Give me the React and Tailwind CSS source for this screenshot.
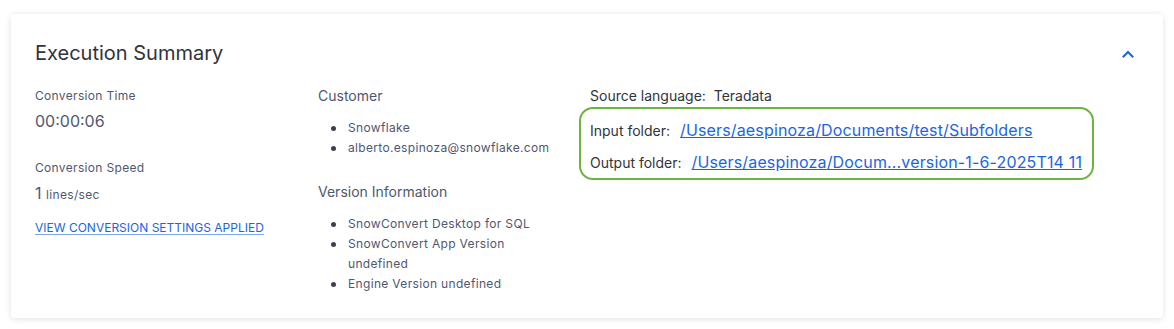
import React from 'react';

function Bullet({ children }) {
	return (
		<li className="flex items-start leading-5">
			<span className="w-[30px] shrink-0 pl-[13px] pt-[8px]">
				<span className="block w-[5px] h-[5px] rounded-full bg-[#3c4253]"></span>
			</span>
			<span>{children}</span>
		</li>
	);
}

function App() {
	return (
		<div className="bg-white w-[1174px] h-[329px] pt-[14px] pl-[11px]" style={{ fontFamily: 'Inter, "Noto Sans", sans-serif' }}>
			<div className="w-[1152px] h-[304px] bg-white rounded-[4px] shadow-[0_1px_6px_rgba(0,0,0,0.12)] px-[24px] pt-[25px]">
				<div className="flex items-center justify-between h-[28px]">
					<h2 className="text-[20px] leading-7 text-[#31343b]">Execution Summary</h2>
					<svg width="12" height="8" viewBox="0 0 12 8" className="mr-[5px] mt-[1px]">
						<polyline points="1.5,6.5 6,2 10.5,6.5" fill="none" stroke="#1a66e0" strokeWidth="2" strokeLinecap="square" />
					</svg>
				</div>
				<div className="flex mt-[19px]">
					<div className="w-[283px] text-[#4f5770]">
						<div className="text-[12px] tracking-[0.33px] leading-4 mt-[2px]">Conversion Time</div>
						<div className="text-[16px] leading-6 mt-[5px]">00:00:06</div>
						<div className="text-[12px] tracking-[0.33px] leading-4 mt-[27px]">Conversion Speed</div>
						<div className="leading-6 mt-[5px]"><span className="text-[16px]">1</span> <span className="text-[12px] tracking-[0.33px]">lines/sec</span></div>
						<a href="#" className="block text-[12px] leading-4 mt-[13px] text-[#1a66e0] underline decoration-[#7aa6ee] underline-offset-2">VIEW CONVERSION SETTINGS APPLIED</a>
					</div>
					<div className="w-[240px] mr-[32px] text-[#4f5770]">
						<div className="text-[14px] leading-5">Customer</div>
						<ul className="text-[12px] tracking-[0.33px] mt-[12px]">
							<Bullet>Snowflake</Bullet>
							<Bullet>alberto.espinoza@snowflake.com</Bullet>
						</ul>
						<div className="text-[14px] leading-5 mt-[24px]">Version Information</div>
						<ul className="text-[12px] tracking-[0.33px] mt-[12px]">
							<Bullet>SnowConvert Desktop for SQL</Bullet>
							<Bullet>SnowConvert App Version undefined</Bullet>
							<Bullet>Engine Version undefined</Bullet>
						</ul>
					</div>
					<div className="text-[14px] text-[#31343b]">
						<div className="leading-5">Source language:&nbsp;&nbsp;Teradata</div>
						<div className="-ml-[11px] mt-[1px] w-[515px] h-[73px] border-2 border-[#6db33f] rounded-[14px] pl-[9px] pt-[9px]">
							<div className="flex items-center h-[24px]">
								<span>Input folder:</span>
								<a href="#" className="ml-[10px] text-[16px] tracking-[0.15px] text-[#1a66e0] underline">/Users/aespinoza/Documents/test/Subfolders</a>
							</div>
							<div className="flex items-center h-[24px] mt-[8px]">
								<span>Output folder:</span>
								<a href="#" className="ml-[10px] text-[16px] tracking-[0.15px] text-[#1a66e0] underline">/Users/aespinoza/Docum...version-1-6-2025T14 11</a>
							</div>
						</div>
					</div>
				</div>
			</div>
		</div>
	);
}

export default App;
